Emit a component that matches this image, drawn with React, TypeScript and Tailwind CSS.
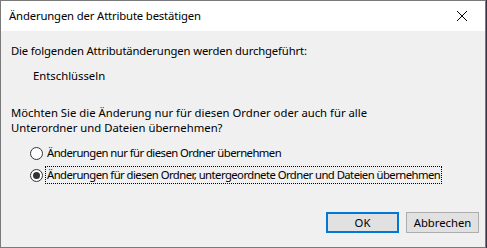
import React from 'react'

const FONT = '"Noto Sans", "Liberation Sans", sans-serif'

function Radio({ checked, label, focused }: { checked?: boolean; label: string; focused?: boolean }) {
  return (
    <label className="flex items-center h-[18px] whitespace-nowrap">
      <span className="w-[13px] h-[13px] rounded-full border border-[#333333] bg-white flex items-center justify-center shrink-0">
        {checked && <span className="w-[7px] h-[7px] rounded-full bg-[#333333]" />}
      </span>
      <span
        className={`ml-[2px] px-[1px] leading-[16px] tracking-[-0.55px] ${focused ? 'border border-dotted border-black' : 'border border-transparent'}`}
      >
        {label}
      </span>
    </label>
  )
}

export default function App() {
  return (
    <div className="w-[487px] h-[248px] bg-[#3b3344]" style={{ fontFamily: FONT }}>
      <div className="w-[486px] h-[248px] border border-[#7a7a7a] flex flex-col text-[11.3px] text-black">
        <div className="h-[30px] bg-white flex items-center justify-between shrink-0">
          <span className="pl-[8px] text-[11.3px] tracking-[-0.15px]">Änderungen der Attribute bestätigen</span>
          <svg width="46" height="30" viewBox="0 0 46 30" className="shrink-0">
            <path d="M18 10 L28 20 M28 10 L18 20" stroke="#000" strokeWidth="1" fill="none" />
          </svg>
        </div>
        <div className="flex-1 bg-[#f0f0f0] flex flex-col pl-[10px] pr-[6px]">
          <p className="mt-[12px] leading-[15px] tracking-[-0.15px]">Die folgenden Attributänderungen werden durchgeführt:</p>
          <p className="mt-[10px] ml-[22px] leading-[15px]">Entschlüsseln</p>
          <p className="mt-[22px] leading-[15px]">
            Möchten Sie die Änderung nur für diesen Ordner oder auch für alle
            <br />
            Unterordner und Dateien übernehmen?
          </p>
          <div className="mt-[9px] ml-[19px] flex flex-col gap-[4px]">
            <Radio label="Änderungen nur für diesen Ordner übernehmen" />
            <Radio checked focused label="Änderungen für diesen Ordner, untergeordnete Ordner und Dateien übernehmen" />
          </div>
          <div className="mt-auto mb-[14px] flex justify-end gap-[7px]">
            <button className="w-[73px] h-[21px] bg-[#e1e1e1] border-2 border-[#0078d7] text-[11.3px] leading-none">
              OK
            </button>
            <button className="w-[73px] h-[21px] bg-[#e1e1e1] border border-[#adadad] text-[11.3px] leading-none">
              Abbrechen
            </button>
          </div>
        </div>
      </div>
    </div>
  )
}
